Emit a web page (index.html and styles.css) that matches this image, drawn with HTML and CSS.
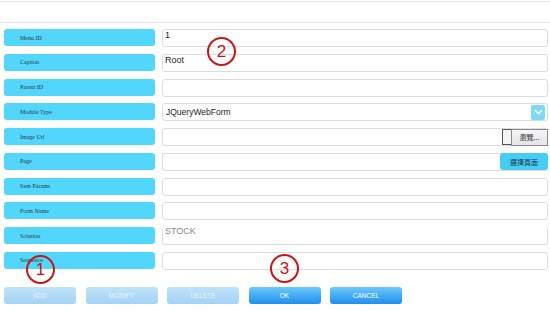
FILE: index.html
```html
<!DOCTYPE html>
<html lang="en">
<head>
    <meta charset="UTF-8">
    <meta name="viewport" content="width=device-width, initial-scale=1.0">
    <title>Menu Editor</title>
    <link rel="stylesheet" href="styles.css">
</head>
<body>
    <div class="topbar"></div>
    <form class="menu-form">
        <div class="label">Menu ID</div>
        <div class="field top">1</div>

        <div class="label">Caption</div>
        <div class="field top">Root</div>

        <div class="label">Parent ID</div>
        <div class="field"></div>

        <div class="label">Module Type</div>
        <div class="field select">
            <span>JQueryWebForm</span>
            <span class="arrow">
                <svg width="9" height="6" viewBox="0 0 9 6"><path d="M1 1 L4.5 4.5 L8 1" fill="none" stroke="#fff" stroke-width="1.6"/></svg>
            </span>
        </div>

        <div class="label">Image Url</div>
        <div class="field file">
            <span class="file-box"></span>
            <span class="browse">瀏覽...</span>
        </div>

        <div class="label">Page</div>
        <div class="field file">
            <span class="pick">選擇頁面</span>
        </div>

        <div class="label">Item Params</div>
        <div class="field"></div>

        <div class="label">Form Name</div>
        <div class="field"></div>

        <div class="label">Solution</div>
        <div class="field solution">STOCK</div>

        <div class="label">Sequence</div>
        <div class="field"></div>
    </form>

    <div class="buttons">
        <button class="btn faded">ADD</button>
        <button class="btn faded">MODIFY</button>
        <button class="btn faded">DELETE</button>
        <button class="btn">OK</button>
        <button class="btn">CANCEL</button>
    </div>

    <!-- annotation markers -->
    <span class="marker m1">1</span>
    <span class="marker m2">2</span>
    <span class="marker m3">3</span>
</body>
</html>
```

FILE: styles.css
```css
body {
    margin: 0;
    width: 550px;
    height: 311px;
    background: #fff;
    font-family: 'Liberation Sans', Arial, sans-serif;
    position: relative;
    overflow: hidden;
}
.topbar {
    height: 20px;
    margin-top: 1px;
    border-top: 1px solid #e2e2ea;
    border-bottom: 1px solid #e2e2ea;
}
.menu-form {
    display: grid;
    grid-template-columns: 151px 386px;
    grid-auto-rows: 17px;
    column-gap: 7px;
    row-gap: 7.78px;
    padding: 6px 0 0 4px;
}
.label {
    background: #52d6fb;
    border-radius: 3px;
    font-family: 'Liberation Serif', serif;
    font-size: 6px;
    color: #2c3a44;
    padding-left: 16px;
    display: flex;
    align-items: center;
}
.field {
    border: 1px solid #dcdce4;
    border-radius: 3px;
    background: #fff;
    font-size: 9px;
    color: #222;
    padding: 0 2px;
    display: flex;
    align-items: center;
    box-sizing: border-box;
    height: 18px;
}
.field.top {
    align-items: flex-start;
    line-height: 10px;
}
.select {
    justify-content: space-between;
    padding-left: 3px;
    font-size: 8.5px;
}
.arrow {
    width: 14px;
    height: 15px;
    background: #7ed9f5;
    border-radius: 2px;
    display: flex;
    align-items: center;
    justify-content: center;
}
.file {
    justify-content: flex-end;
    padding: 0;
    border-right: none;
}
.file-box {
    width: 9px;
    height: 16px;
    box-sizing: border-box;
    border: 1px solid #555;
    border-right: none;
    background: #f4f4f4;
}
.browse {
    width: 37px;
    height: 17px;
    box-sizing: border-box;
    border: 1px solid #8a8a8a;
    background: linear-gradient(#f6f6f6, #e4e4e4);
    font-family: 'Noto Sans CJK TC', sans-serif;
    font-size: 7px;
    color: #222;
    display: flex;
    align-items: center;
    justify-content: center;
}
.pick {
    width: 48px;
    height: 17px;
    background: #45cdf5;
    border-radius: 3px;
    font-family: 'Noto Sans CJK TC', sans-serif;
    font-size: 7px;
    color: #1c3b4a;
    display: flex;
    align-items: center;
    justify-content: center;
}
.solution {
    align-items: flex-start;
    color: #888;
    border-top: none;
    line-height: 8px;
}
.buttons {
    display: flex;
    gap: 9.5px;
    padding: 18px 0 0 4px;
}
.btn {
    width: 72px;
    height: 17px;
    border: none;
    border-radius: 3px;
    background: linear-gradient(#6cc8fb, #1e8fee);
    color: #fff;
    font-family: 'Liberation Sans', Arial, sans-serif;
    font-size: 6.5px;
    padding: 0;
}
.btn.faded {
    background: linear-gradient(#c0e3f9, #a3d3f5);
    color: #e8f5fd;
}
.marker {
    position: absolute;
    width: 25px;
    height: 25px;
    border: 2.5px solid #cc1414;
    border-radius: 50%;
    color: #cc1414;
    font-family: 'Liberation Sans', Arial, sans-serif;
    font-size: 17px;
    display: flex;
    align-items: center;
    justify-content: center;
}
.m1 { left: 26px; top: 255px; }
.m2 { left: 207px; top: 37px; }
.m3 { left: 270px; top: 254px; }
```
